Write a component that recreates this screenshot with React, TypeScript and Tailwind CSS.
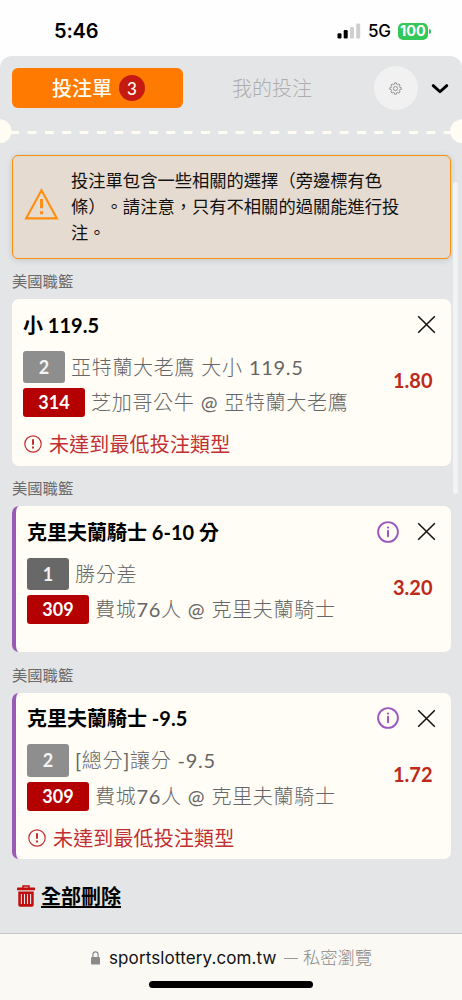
import React from 'react';

interface Bet {
  id: string;
  title: string;
  code: string;
  codeTone: string;
  market: string;
  gameNo: string;
  match: string;
  odds: string;
  related: boolean;
  warning: boolean;
}

const bets: Bet[] = [
  {
    id: 'a',
    title: '小 119.5',
    code: '2',
    codeTone: 'bg-[#8e8e8e]',
    market: '亞特蘭大老鷹 大小 119.5',
    gameNo: '314',
    match: '芝加哥公牛 @ 亞特蘭大老鷹',
    odds: '1.80',
    related: false,
    warning: true,
  },
  {
    id: 'b',
    title: '克里夫蘭騎士 6-10 分',
    code: '1',
    codeTone: 'bg-[#686868]',
    market: '勝分差',
    gameNo: '309',
    match: '費城76人 @ 克里夫蘭騎士',
    odds: '3.20',
    related: true,
    warning: false,
  },
  {
    id: 'c',
    title: '克里夫蘭騎士 -9.5',
    code: '2',
    codeTone: 'bg-[#8e8e8e]',
    market: '[總分]讓分 -9.5',
    gameNo: '309',
    match: '費城76人 @ 克里夫蘭騎士',
    odds: '1.72',
    related: true,
    warning: true,
  },
];

function StatusBar() {
  return (
    <div className="h-14 flex items-center justify-between pl-[54px] pr-[31px] pt-[6px] font-['Inter','Noto_Sans_CJK_TC',sans-serif]">
      <span className="text-[20px] font-semibold leading-none tracking-[-0.2px] text-black">5:46</span>
      <div className="flex items-center">
        <svg className="w-6 h-4" viewBox="0 0 24 16">
          <rect x="0.5" y="10.2" width="4" height="5.3" rx="1.2" fill="#000" />
          <rect x="6.7" y="7" width="4" height="8.5" rx="1.2" fill="#000" />
          <rect x="13" y="4" width="4" height="11.5" rx="1.2" fill="#cfcfcf" />
          <rect x="19.2" y="0.6" width="4" height="14.9" rx="1.2" fill="#cfcfcf" />
        </svg>
        <span className="ml-[7px] w-[23px] text-[17px] leading-none tracking-[-0.3px] font-medium text-black">5G</span>
        <div className="ml-[7px] w-[30px] h-[17px] rounded-[5px] bg-[#34c759] flex items-center justify-center text-white text-[14.5px] leading-none font-bold">
          100
        </div>
        <div className="ml-px w-[2px] h-[5px] rounded-r-full bg-[#34c759]" />
      </div>
    </div>
  );
}

function Header() {
  return (
    <div className="h-[63px] pt-3 pl-[11.5px] flex items-start">
      <button className="w-[171px] h-10 pl-[3px] rounded-[6px] bg-[#ff7a00] flex items-center justify-center gap-[7px] text-[#fffdf3]">
        <span className="text-[20px] leading-none font-medium">投注單</span>
        <span className="w-[26px] h-[26px] rounded-full bg-[#c41a12] flex items-center justify-center text-[17px] leading-none font-medium">3</span>
      </button>
      <button className="ml-[49.5px] w-20 h-10 text-[20px] leading-none font-light text-[#adadad] whitespace-nowrap">我的投注</button>
      <button className="ml-[61.5px] -mt-[2px] w-[44px] h-[44px] rounded-full bg-[#f1f1f1] flex items-center justify-center">
        <svg className="w-[13px] h-[13px]" viewBox="0 0 24 24" fill="none" stroke="#8a8a8a" strokeWidth="1.7" strokeLinejoin="round">
          <path d="M9.7 4.3 L10.5 1.5 H13.5 L14.3 4.3 L15.8 4.9 L18.3 3.5 L20.5 5.7 L19.1 8.2 L19.7 9.7 L22.5 10.5 V13.5 L19.7 14.3 L19.1 15.8 L20.5 18.3 L18.3 20.5 L15.8 19.1 L14.3 19.7 L13.5 22.5 H10.5 L9.7 19.7 L8.2 19.1 L5.7 20.5 L3.5 18.3 L4.9 15.8 L4.3 14.3 L1.5 13.5 V10.5 L4.3 9.7 L4.9 8.2 L3.5 5.7 L5.7 3.5 L8.2 4.9 Z" />
          <circle cx="12" cy="12" r="3.8" />
        </svg>
      </button>
      <svg className="ml-[13px] mt-[16px] w-[18px] h-[10px]" viewBox="0 0 18 10" fill="none" stroke="#000" strokeWidth="2.8" strokeLinecap="round" strokeLinejoin="round">
        <path d="M2.2 1.6 L9 7.8 L15.8 1.6" />
      </svg>
    </div>
  );
}

/* ticket style perforation */
function Perforation() {
  return (
    <svg className="block w-full h-6" viewBox="0 0 462 24">
      <circle cx="-0.5" cy="12.3" r="12" fill="#fffdf3" />
      <circle cx="462.2" cy="12.3" r="12" fill="#fffdf3" />
      <path d="M10.3 13.4 H452" stroke="#fffdf3" strokeWidth="3" strokeDasharray="8.8 8.54" />
    </svg>
  );
}

function Alert() {
  return (
    <div className="mt-3 ml-[11.5px] w-[439px] h-[103.5px] rounded-[6px] border-[1.5px] border-[#ff8f0f] bg-[#e6dbd0] shadow-[0_1px_6px_rgba(0,0,0,0.15)] flex items-center">
      <svg className="ml-[11.5px] mb-[6px] w-[35px] h-[32px] shrink-0" viewBox="0 0 35 32" fill="none" stroke="#ff8f0f">
        <path d="M17.5 2.2 L32.9 30.4 H2.1 Z" strokeWidth="2.1" />
        <path d="M17.5 11 V20.2" strokeWidth="2.9" />
        <path d="M17.5 23.2 V26.2" strokeWidth="2.9" />
      </svg>
      <p className="ml-[12px] text-[17.3px] leading-[26px] text-[#111] whitespace-nowrap [text-spacing-trim:space-all]">
        投注單包含一些相關的選擇（旁邊標有色
        <br />
        條）。請注意，只有不相關的過關能進行投
        <br />
        注。
      </p>
    </div>
  );
}

// Chinese glyphs stay light while digits and latin signs use the regular weight
function DetailText({ text }: { text: string }) {
  const parts = text.split(/([\x21-\x7e]+)/);
  return (
    <span className="text-[20px] leading-[29px] tracking-[0.7px] font-light text-[#666]">
      {parts.map((part, i) =>
        i % 2 === 1 ? (
          <span key={i} className="font-normal">
            {part}
          </span>
        ) : (
          part
        )
      )}
    </span>
  );
}

function BetCard({ bet }: { bet: Bet }) {
  return (
    <section>
      <h3 className="h-[40.5px] pt-[10.5px] pl-3 text-[15.3px] leading-[24px] text-[#6a6a6a]">美國職籃</h3>
      <div
        className={`ml-[11.5px] w-[439px] rounded-[7px] bg-[#fffdf5] flex justify-between pr-[15px] ${
          bet.warning ? 'h-[166.5px]' : 'h-[146px]'
        } ${bet.related ? 'border-l-[4.5px] border-[#9b59b6] pl-[11.5px]' : 'pl-[11.5px]'}`}
      >
        <div className="flex flex-col items-start whitespace-nowrap">
          <h4 className="mt-[12.5px] h-[26px] text-[20px] leading-[26px] font-bold text-black">{bet.title}</h4>
          <div className="mt-[13px] h-[33px] flex items-center gap-[6px]">
            <span className={`w-[42px] h-[32.5px] rounded-[3px] text-[#f4f4f4] text-[18px] font-bold flex items-center justify-center ${bet.codeTone}`}>
              {bet.code}
            </span>
            <DetailText text={bet.market} />
          </div>
          <div className="mt-[4.5px] h-[29px] flex items-center gap-[6px]">
            <span className="w-[62px] h-[29px] rounded-[3px] bg-[#b40000] text-white text-[18px] font-bold flex items-center justify-center">
              {bet.gameNo}
            </span>
            <DetailText text={bet.match} />
          </div>
          {bet.warning && (
            <div className="mt-[12px] h-[30px] flex items-center gap-[7px] text-[#c22f33]">
              <svg className="ml-px w-[18px] h-[18px]" viewBox="0 0 18 18" fill="none" stroke="currentColor">
                <circle cx="9" cy="9" r="8.2" strokeWidth="1.2" />
                <path d="M9 4.2 V9.8 M9 11.6 V13.5" strokeWidth="2" />
              </svg>
              <span className="text-[20px] leading-[30px] tracking-[0.15px]">未達到最低投注類型</span>
            </div>
          )}
        </div>
        <div className="flex flex-col items-end pt-[12.5px]">
          <div className="h-[26px] flex items-center gap-[18px]">
            {bet.related && (
              <svg className="w-[22px] h-[22px]" viewBox="0 0 22 22" fill="none" stroke="#9b59c0">
                <circle cx="11" cy="11" r="9.9" strokeWidth="1.9" />
                <path d="M11 9.8 V15.3" strokeWidth="2" strokeLinecap="round" />
                <circle cx="11" cy="6.6" r="1.1" fill="#9b59c0" stroke="none" />
              </svg>
            )}
            <svg className="w-[19px] h-[19px]" viewBox="0 0 19 19" fill="none" stroke="#111" strokeWidth="1.5">
              <path d="M1.2 1.2 L17.8 17.8 M17.8 1.2 L1.2 17.8" />
            </svg>
          </div>
          <span className="mt-[29.5px] mr-[3px] text-[20px] leading-[26px] font-bold text-[#bc2a1d]">{bet.odds}</span>
        </div>
      </div>
    </section>
  );
}

function BrowserBar() {
  return (
    <div className="h-[67px] border-t border-[#c5c6c8] bg-[#faf9f3] flex flex-col items-center font-['Inter','Noto_Sans_CJK_TC',sans-serif]">
      <div className="mt-[11px] h-[26px] w-full pl-[91px] flex items-center whitespace-nowrap text-[17px] leading-[26px]">
        <svg className="w-[9px] h-[14px]" viewBox="0 0 9 14">
          <path d="M1.9 7 V3.8 a2.6 2.9 0 0 1 5.2 0 V7" fill="none" stroke="#8a8a8a" strokeWidth="1.2" />
          <rect x="0" y="6" width="9" height="7.6" rx="1.2" fill="#8a8a8a" />
        </svg>
        <span className="ml-[9px] w-[168px] tracking-[0.12px] text-[#111]">sportslottery.com.tw</span>
        <span className="ml-[7px] w-[14px] h-px bg-[#999]" />
        <span className="ml-[5px] font-light text-[17.3px] text-[#888]">私密瀏覽</span>
      </div>
      <div className="mt-[10px] w-[164px] h-[7px] rounded-full bg-black" />
    </div>
  );
}

export default function App() {
  return (
    <div className="w-[462px] h-[1000px] overflow-hidden bg-[#fefefe] flex flex-col font-['Lato','Noto_Sans_CJK_TC',sans-serif]" lang="zh-Hant">
      <StatusBar />
      <main className="relative flex-1 rounded-t-[12px] bg-[#e4e5e7]">
        <Header />
        <Perforation />
        <Alert />
        {bets.map((bet) => (
          <BetCard key={bet.id} bet={bet} />
        ))}
        <button className="mt-[22px] ml-[17px] h-[30px] flex items-center gap-[6px]">
          <svg className="w-[18px] h-[22px]" viewBox="0 0 18 22">
            <path d="M6 3 V1 H12 V3" fill="none" stroke="#c00d0d" strokeWidth="1.5" />
            <rect x="0" y="2.6" width="18" height="2.7" rx="0.6" fill="#c00d0d" />
            <path d="M1.3 6.6 H16.7 V20 a1.8 1.8 0 0 1 -1.8 1.8 H3.1 A1.8 1.8 0 0 1 1.3 20 Z" fill="#c00d0d" />
            <path d="M4.4 9 V19 M7.5 9 V19 M10.5 9 V19 M13.6 9 V19" stroke="#e4e5e7" strokeWidth="1.1" />
          </svg>
          <span className="text-[20px] leading-[30px] font-bold underline decoration-[1.5px] underline-offset-[2px] text-black">全部刪除</span>
        </button>
        {/* scroll thumb over the list */}
        <div className="absolute top-[126px] right-1 w-[5px] h-[312px] rounded-full bg-[#f2f3f5]" />
      </main>
      <BrowserBar />
    </div>
  );
}
